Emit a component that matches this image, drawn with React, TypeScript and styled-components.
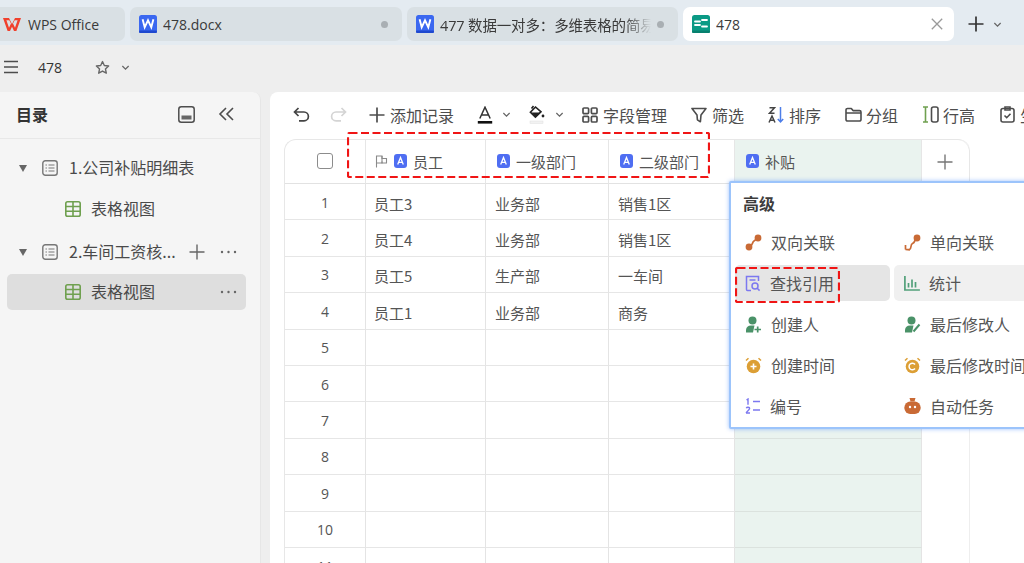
import React from "react";
import styled, { createGlobalStyle } from "styled-components";

const Global = createGlobalStyle`
  html, body { margin: 0; padding: 0; background: #eeeeee; }
  body { font-family: "Noto Sans CJK SC", "Noto Sans", sans-serif; }
  * { box-sizing: border-box; }
`;

const Page = styled.div`
  position: relative; width: 1024px; height: 563px; overflow: hidden;
  display: flex; flex-direction: column; background: #eeeeee; color: #444;
`;
const TabStrip = styled.div`
  height: 45px; flex: none; display: flex; align-items: flex-start; gap: 5px;
  padding-top: 7px; background: #e4ebf1; margin-left: -10px;
`;
const Tab = styled.div<{ $w: number; $active?: boolean }>`
  width: ${p => p.$w}px; height: 34px; flex: none; display: flex; align-items: center;
  border-radius: 7px; padding: 0 ${p => (p.$active ? 11 : 9)}px 0 9px; gap: 6px; font-size: 14px; color: #3a3a3a;
  background: ${p => (p.$active ? "#ffffff" : "#d9e0e4")}; white-space: nowrap; overflow: hidden;
`;
const FirstTab = styled(Tab)`
  padding-left: 13px; gap: 7px;
`;
const TabTitle = styled.span`
  flex: 1; overflow: hidden; white-space: nowrap; font-size: 14.5px; min-width: 0; letter-spacing: -.15px;
  font-family: "Open Sans", "Noto Sans CJK SC", sans-serif;
  -webkit-mask-image: linear-gradient(90deg, #000 calc(100% - 26px), transparent);
  mask-image: linear-gradient(90deg, #000 calc(100% - 26px), transparent);
`;
const PlainTitle = styled(TabTitle)`
  -webkit-mask-image: none; mask-image: none; font-size: 14px; letter-spacing: 0;
`;
const Dot = styled.span`
  width: 7px; height: 7px; border-radius: 50%; background: #a9afb3; flex: none; margin: 0 5px 0 0;
`;
const NewTab = styled.div`
  display: flex; align-items: center; gap: 9px; height: 34px; margin-left: 9px; color: #333;
`;
const TitleBar = styled.div`
  height: 47px; flex: none; display: flex; align-items: center; padding: 0 0 3px 3px; color: #444;
`;
const DocName = styled.span`
  font-family: "Open Sans", sans-serif; font-size: 14px; color: #333; margin: 0 32px 0 19px; width: 25px;
`;
const Body = styled.div`
  flex: 1; min-height: 0; display: flex; gap: 9px;
`;
const Sidebar = styled.aside`
  width: 261px; flex: none; background: #f5f5f5; border-radius: 0 8px 0 0; border-right: 1px solid #e6e6e6;
  display: flex; flex-direction: column;
`;
const SideHead = styled.div`
  height: 47px; flex: none; display: flex; align-items: center; padding: 0 25px 2px 16px; gap: 23px;
  border-bottom: 1px solid #e8e8e8;
`;
const SideTitle = styled.div`
  flex: 1; font-size: 16px; font-weight: 700; color: #333;
`;
const Tree = styled.div`
  padding: 11px 14px 0 7px; display: flex; flex-direction: column;
`;
const TreeRow = styled.div<{ $selected?: boolean; $top?: number }>`
  height: 36px; display: flex; align-items: center; border-radius: 5px; margin-top: ${p => p.$top ?? 0}px;
  background: ${p => (p.$selected ? "#dedede" : "transparent")}; font-size: 16px; color: #4a4a4a; position: relative;
`;
const Caret = styled.span`
  width: 0; height: 0; border-left: 4.5px solid transparent; border-right: 4.5px solid transparent;
  border-top: 7px solid #666; margin: 0 15px 0 12px; flex: none;
`;
const TreeLabel = styled.span`
  margin-left: 11px; flex: 1; white-space: nowrap; position: relative; top: -1px;
`;
const ViewLabel = styled(TreeLabel)`
  margin-left: 10px;
`;
const ViewIndent = styled.span`
  width: 58px; flex: none;
`;
const TreeActions = styled.span`
  display: flex; align-items: center; gap: 15px; margin-right: 9px; color: #666;
`;
const Main = styled.main`
  flex: 1; min-width: 0; background: #fff; border-radius: 8px 0 0 0; overflow: hidden;
  display: flex; flex-direction: column; padding-left: 14px;
`;
const Toolbar = styled.div`
  height: 47px; flex: none; display: flex; align-items: center; padding: 0 0 2px 9px; white-space: nowrap;
`;
const ToolBtn = styled.div<{ $left?: number; $gap?: number }>`
  display: flex; align-items: center; gap: ${p => p.$gap ?? 5}px; margin-left: ${p => p.$left ?? 0}px;
  font-size: 16px; color: #4d4d4d; flex: none;
`;
const Grid = styled.div`
  width: 686px; display: grid; grid-template-columns: 81px 120px 123px 126px 187px 48px;
  grid-template-rows: 44px; grid-auto-rows: 36.4px; border: 1px solid #e7e7e7; border-bottom: 0; border-right: 0;
  border-top-left-radius: 12px; border-top-right-radius: 12px;
`;
const Head = styled.div<{ $tint?: boolean; $pad?: number }>`
  display: flex; align-items: center; gap: 6px; padding-left: ${p => p.$pad ?? 11}px; padding-bottom: 1px;
  border-right: 1px solid #e6e6e6; border-bottom: 1px solid #e2e2e2; font-size: 15px; color: #555;
  background: ${p => (p.$tint ? "#eaf3ef" : "transparent")};
`;
const CheckHead = styled(Head)`
  justify-content: center; padding: 0 1px 1px 0; border-top-left-radius: 12px;
`;
const AddHead = styled.div`
  display: flex; align-items: center; justify-content: center; color: #777; padding-right: 2px;
  border-top-right-radius: 12px; border-right: 1px solid #e7e7e7; border-bottom: 1px solid #e2e2e2;
`;
const Check = styled.span`
  width: 16px; height: 16px; border: 1.5px solid #8c8c8c; border-radius: 3px; display: block;
`;
const Cell = styled.div<{ $tint?: boolean; $index?: boolean; $pad?: number }>`
  border-right: 1px solid #e4e4e4; border-bottom: 1px solid ${p => (p.$tint ? "#dbe2de" : "#e6e6e6")}; display: flex; align-items: center;
  justify-content: ${p => (p.$index ? "center" : "flex-start")}; padding-left: ${p => (p.$index ? 0 : p.$pad ?? 8)}px;
  padding-top: ${p => (p.$index ? 1 : 3)}px;
  font-size: ${p => (p.$index ? 14 : 15)}px; color: #555;
  background: ${p => (p.$tint ? "#eaf3ef" : "transparent")};
  font-family: ${p => (p.$index ? '"Open Sans", sans-serif' : '"Noto Sans CJK SC", sans-serif')};
`;
const Blank = styled.div`
  border-right: 1px solid #eeeeee;
`;
const Popover = styled.div`
  position: absolute; left: 729px; top: 181px; width: 320px; height: 248px; background: #fff;
  border: 2px solid #9cc4fb; box-shadow: 0 0 4px rgba(90, 150, 250, .6); border-radius: 2px;
  padding: 7px 0 0 4px;
`;
const PopTitle = styled.div`
  font-size: 16px; font-weight: 700; color: #3d3d3d; padding-left: 8px; height: 26px; line-height: 26px;
  margin-bottom: 8px;
`;
const PopGrid = styled.div`
  display: grid; grid-template-columns: 155px 155px; column-gap: 4px; row-gap: 5px; grid-auto-rows: 36px;
`;
const PopItem = styled.div<{ $bg?: string }>`
  display: flex; align-items: center; gap: 9px; padding-left: 10px; border-radius: 5px; font-size: 16px;
  color: #555; white-space: nowrap; background: ${p => p.$bg ?? "transparent"};
`;
const RedBox = styled.svg<{ $x: number; $y: number }>`
  position: absolute; left: ${p => p.$x}px; top: ${p => p.$y}px; pointer-events: none;
`;

type SP = { s?: number; c?: string; w?: number };
const Plus = ({ s = 16, c = "currentColor", w = 1.6 }: SP) => (
  <svg width={s} height={s} viewBox="0 0 16 16" fill="none" stroke={c} strokeWidth={w}><path d="M8 .5v15M.5 8h15" /></svg>
);
const Chev = ({ s = 9, c = "#666" }: SP) => (
  <svg width={s} height={s} viewBox="0 0 10 10" fill="none" stroke={c} strokeWidth="1.4"><path d="M1.5 3.3 5 6.8l3.5-3.5" /></svg>
);
const More = () => (
  <svg width="17" height="4" viewBox="0 0 17 4" fill="#666"><circle cx="2" cy="2" r="1.2" /><circle cx="8.5" cy="2" r="1.2" /><circle cx="15" cy="2" r="1.2" /></svg>
);
const WpsLogo = () => (
  <svg width="18" height="13" viewBox="0 0 18 13"><path d="M0 0h6l3 6 3-6h6l-4.600 13H11L9 8.700 7 13H4.600z M3.400 2.300 6 9.800l2-4.300-1.700-3.200z M14.600 2.300h-2.900L10 5.500l2 4.300z" fill="#f0402c" fillRule="evenodd" /></svg>
);
const WordIcon = () => (
  <svg width="18" height="18" viewBox="0 0 18 18"><rect width="18" height="18" rx="2.5" fill="#3b68f0" /><rect y="15.500" width="18" height="2.500" rx="1" fill="#1f49cf" /><path d="M3.600 4.200 5.700 12.300 9 5.300l3.300 7 2.100-8.100" fill="none" stroke="#fff" strokeWidth="1.900" /></svg>
);
const SheetLogo = () => (
  <svg width="18" height="18" viewBox="0 0 18 18"><rect width="18" height="18" rx="2.500" fill="#0b9a85" /><rect y="15.500" width="18" height="2.500" rx="1" fill="#07806e" /><path d="M3 6.500h5M10 5h5M3 10h5M10 11.500h5" stroke="#fff" strokeWidth="1.800" strokeLinecap="round" /></svg>
);
const CloseX = () => (
  <svg width="12" height="12" viewBox="0 0 12 12" stroke="#9a9a9a" strokeWidth="1.3"><path d="M.8.8l10.400 10.400M11.200.8.8 11.200" /></svg>
);
const Menu = () => (
  <svg width="16" height="14" viewBox="0 0 16 14" stroke="#4d4d4d" strokeWidth="1.600"><path d="M1 1.500h14M1 7h14M1 12.500h14" /></svg>
);
const Star = () => (
  <svg width="15" height="15" viewBox="0 0 24 24" fill="none" stroke="#666" strokeWidth="2.200" strokeLinejoin="round"><path d="m12 2.500 2.900 6.300 6.900.8-5.100 4.700 1.400 6.800-6.100-3.400-6.100 3.400 1.400-6.800L2.200 9.600l6.900-.8z" /></svg>
);
const Panel = () => (
  <svg width="17" height="17" viewBox="0 0 17 17"><rect x=".8" y=".8" width="15.400" height="15.400" rx="2.500" fill="none" stroke="#4d4d4d" strokeWidth="1.500" /><rect x="3.500" y="9.500" width="10" height="4" fill="#666" /></svg>
);
const DoubleLeft = () => (
  <svg width="17" height="14" viewBox="0 0 17 14" fill="none" stroke="#4d4d4d" strokeWidth="1.600"><path d="M8 1 2 7l6 6M15 1 9 7l6 6" /></svg>
);
const Doc = () => (
  <svg width="16" height="16" viewBox="0 0 16 16" fill="none" stroke="#777"><rect x=".8" y=".8" width="14.400" height="14.400" rx="2.500" strokeWidth="1.400" /><path d="M3.500 5h1.400M6.500 5h6M3.500 8h1.400M6.500 8h6M3.500 11h1.400M6.500 11h6" strokeWidth="1.200" /></svg>
);
const GreenTable = () => (
  <svg width="16" height="16" viewBox="0 0 16 16" fill="none" stroke="#6fa04f" strokeWidth="1.600"><rect x=".8" y=".8" width="14.400" height="14.400" rx="1.800" /><path d="M.8 5.500h14.400M.8 10.300h14.400M8 .8v14.400" /></svg>
);
const Undo = ({ c = "#444" }: { c?: string }) => (
  <svg width="17" height="16" viewBox="0 0 17 16" fill="none" stroke={c} strokeWidth="1.700"><path d="M5.500 1 1.500 5l4 4M1.500 5h9.500a4.400 4.400 0 0 1 0 8.800H6" /></svg>
);
const RedoWrap = styled.span`
  display: inline-flex; transform: scaleX(-1);
`;
const Redo = () => (
  <RedoWrap><Undo c="#d4d4d4" /></RedoWrap>
);
const TextColor = () => (
  <svg width="16" height="18" viewBox="0 0 16 18"><path d="M2.800 12.500 8 1.200l5.200 11.300M4.600 9h6.800" fill="none" stroke="#333" strokeWidth="1.500" /><rect x=".8" y="15" width="14.400" height="2.600" fill="#111" /></svg>
);
const Bucket = () => (
  <svg width="16" height="19" viewBox="0 0 16 19"><path d="M4.500 1 2.500 3.500M6.500 2 1.400 7.200l5 5 5.600-5.400z" fill="none" stroke="#222" strokeWidth="1.600" /><path d="M2 7.500h9.500l-5 4.800z" fill="#222" /><circle cx="14" cy="11" r="1.400" fill="#222" /><rect x="1" y="16" width="13" height="2.400" fill="#f2f2f2" stroke="#ddd" strokeWidth=".5" /></svg>
);
const Fields = () => (
  <svg width="16" height="16" viewBox="0 0 16 16" fill="none" stroke="#4d4d4d" strokeWidth="1.700"><rect x="1" y="1" width="5.600" height="5.600" rx="1" /><rect x="9.400" y="1" width="5.600" height="5.600" rx="1" /><rect x="1" y="9.400" width="5.600" height="5.600" rx="1" /><rect x="9.400" y="9.400" width="5.600" height="5.600" rx="1" /></svg>
);
const Funnel = () => (
  <svg width="16" height="16" viewBox="0 0 16 16" fill="none" stroke="#4d4d4d" strokeWidth="1.600" strokeLinejoin="round"><path d="M1 1.500h14L10 8l-.6 6.800-3-2L6 8z" /></svg>
);
const Sort = () => (
  <svg width="16" height="18" viewBox="0 0 16 18" fill="none"><path d="M1.500 1.800h5L1.500 7.200h5" stroke="#444" strokeWidth="1.500" /><path d="M1 16.500 4 10l3 6.500M2 14.300h4" stroke="#444" strokeWidth="1.500" /><path d="M12.500 1v15M9.800 13l2.700 3 2.700-3" stroke="#4d7ee8" strokeWidth="1.500" /></svg>
);
const Folder = () => (
  <svg width="17" height="15" viewBox="0 0 17 15" fill="none" stroke="#4d4d4d" strokeWidth="1.600" strokeLinejoin="round"><path d="M1 3a1.500 1.500 0 0 1 1.500-1.500h3.800L8 3.600h6.500A1.500 1.500 0 0 1 16 5.100v7.400a1.500 1.500 0 0 1-1.500 1.500h-12A1.500 1.500 0 0 1 1 12.500zM1 6h15" /></svg>
);
const RowHeight = () => (
  <svg width="17" height="17" viewBox="0 0 17 17" fill="none"><path d="M1 1h5M1 16h5M3.500 1v15" stroke="#6fa04f" strokeWidth="1.600" /><rect x="9.500" y="1" width="6.500" height="15" rx="2" stroke="#4d4d4d" strokeWidth="1.600" /></svg>
);
const Clip = () => (
  <svg width="15" height="17" viewBox="0 0 15 17" fill="none" stroke="#4d4d4d" strokeWidth="1.600"><rect x="1" y="2.500" width="13" height="13.500" rx="2" /><path d="M5 1h5v3H5zM4.500 9.500l2.200 2.200 3.800-4" /></svg>
);
const Flag = () => (
  <svg width="13" height="13" viewBox="0 0 13 13" fill="none" stroke="#8a8a8a" strokeWidth="1.100"><path d="M1.500 12.500V1h5.500v2.500h4.500v4.500H7V6.500" /><path d="M1.500 8H7V1" /></svg>
);
const TypeA = () => (
  <svg width="13" height="14" viewBox="0 0 13 14"><rect width="13" height="14" rx="3" fill="#4f6ef2" /><path d="M3.700 10.500 6.500 3.600l2.800 6.900M4.700 8.300h3.600" fill="none" stroke="#fff" strokeWidth="1.300" /></svg>
);

const Link2 = ({ arrow }: { arrow?: boolean }) => (
  <svg width="17" height="17" viewBox="0 0 17 17" fill="none">
    <circle cx="13" cy="4" r="3.400" fill="#c96a35" />
    {arrow ? <path d="M1.500 15.500 6 16M1.500 15.500 1.500 11M1.500 15.500h4c2.500-1 .5-5 3-6s2-3 3-4" stroke="#c96a35" strokeWidth="1.700" /> : <><circle cx="4" cy="13" r="3.400" fill="#c96a35" /><path d="M5 12c3-.5 2-4 4-5s2-2 3-3" stroke="#c96a35" strokeWidth="1.800" /></>}
  </svg>
);
const Lookup = () => (
  <svg width="16" height="17" viewBox="0 0 16 17" fill="none" stroke="#7c78f0" strokeWidth="1.500"><path d="M6 15.500H2.500a1 1 0 0 1-1-1V1.500h12V6" /><path d="M4.500 5h6" /><circle cx="10" cy="11" r="3" /><path d="m12.200 13.200 2.400 2.400" /></svg>
);
const Bars = () => (
  <svg width="16" height="16" viewBox="0 0 16 16" fill="none" stroke="#52a07a" strokeWidth="1.700"><path d="M.9 1v14h15M4.500 8v4.500M8 4.500v8M11.500 7v5.500" /></svg>
);
const Person = ({ pen }: { pen?: boolean }) => (
  <svg width="17" height="17" viewBox="0 0 17 17"><circle cx="7.500" cy="4.500" r="4" fill="#4a9268" /><path d="M1 16.500V14a5 5 0 0 1 5-4.500h3.500L8 16.500z" fill="#4a9268" />{pen ? <path d="M9.500 15.500 15.500 8.500" stroke="#4a9268" strokeWidth="2" /> : <path d="M9.500 13.500h6.500M12.700 10.500v6" stroke="#4a9268" strokeWidth="1.700" />}</svg>
);
const Clock = ({ refresh }: { refresh?: boolean }) => (
  <svg width="17" height="17" viewBox="0 0 17 17" fill="none"><circle cx="8.500" cy="9.500" r="6.800" fill="#dc9f35" /><path d="M1 3.500 3.500 1.200M16 3.500l-2.500-2.300" stroke="#dc9f35" strokeWidth="1.500" />{refresh ? <path d="M11 7.500a3.300 3.300 0 1 0 0 4" stroke="#fff" strokeWidth="1.500" /> : <path d="M5.500 9.500h6M8.500 6.500v6" stroke="#fff" strokeWidth="1.600" />}</svg>
);
const Numbered = () => (
  <svg width="16" height="16" viewBox="0 0 16 16" fill="none" stroke="#7c78f0" strokeWidth="1.400"><path d="M1.500 2 3 1v5.800M1 15h4M1.300 10.200c.6-1.400 3.400-1.200 3.300.3 0 1.200-2.500 2.400-3.500 4.500M8 3.500h7M8 12h7" /></svg>
);
const Robot = () => (
  <svg width="17" height="16" viewBox="0 0 17 16"><path d="M5.500 0h6l-1 3.500h-4z" fill="#c96a35" /><rect x=".4" y="3.500" width="16.200" height="12.500" rx="5.800" fill="#c96a35" /><circle cx="6" cy="9" r="1.200" fill="#fff" /><circle cx="11" cy="9" r="1.200" fill="#fff" /></svg>
);

const rows: [string, string, string][] = [
  ["员工3", "业务部", "销售1区"],
  ["员工4", "业务部", "销售1区"],
  ["员工5", "生产部", "一车间"],
  ["员工1", "业务部", "商务"],
  ["", "", ""], ["", "", ""], ["", "", ""], ["", "", ""], ["", "", ""], ["", "", ""], ["", "", ""],
];

const menu: [React.ReactNode, string, string?][] = [
  [<Link2 />, "双向关联"],
  [<Link2 arrow />, "单向关联"],
  [<Lookup />, "查找引用", "#e5e5e5"],
  [<Bars />, "统计", "#f0f0f0"],
  [<Person />, "创建人"],
  [<Person pen />, "最后修改人"],
  [<Clock />, "创建时间"],
  [<Clock refresh />, "最后修改时间"],
  [<Numbered />, "编号"],
  [<Robot />, "自动任务"],
];

const StarChev = styled.span`
  margin-left: 11px; display: inline-flex;
`;

const Dashed = ({ x, y, w, h }: { x: number; y: number; w: number; h: number }) => (
  <RedBox $x={x} $y={y} width={w} height={h}>
    <rect x="1" y="1" width={w - 2} height={h - 2} rx="1.500" fill="none" stroke="#f01515" strokeWidth="2.200" strokeDasharray="8 3.500" />
  </RedBox>
);

export default function App() {
  return (
    <Page>
      <Global />
      <TabStrip>
        <FirstTab $w={135}><WpsLogo /><PlainTitle>WPS Office</PlainTitle></FirstTab>
        <Tab $w={272}><WordIcon /><PlainTitle>478.docx</PlainTitle><Dot /></Tab>
        <Tab $w={271}><WordIcon /><TabTitle>477 数据一对多：多维表格的简易能力</TabTitle><Dot /></Tab>
        <Tab $w={271} $active><SheetLogo /><PlainTitle>478</PlainTitle><CloseX /></Tab>
        <NewTab><Plus s={16} c="#333" w={1.7} /><Chev /></NewTab>
      </TabStrip>
      <TitleBar>
        <Menu />
        <DocName>478</DocName>
        <Star />
        <StarChev><Chev /></StarChev>
      </TitleBar>
      <Body>
        <Sidebar>
          <SideHead>
            <SideTitle>目录</SideTitle>
            <Panel />
            <DoubleLeft />
          </SideHead>
          <Tree>
            <TreeRow><Caret /><Doc /><TreeLabel>1.公司补贴明细表</TreeLabel></TreeRow>
            <TreeRow $top={5}><ViewIndent /><GreenTable /><ViewLabel>表格视图</ViewLabel></TreeRow>
            <TreeRow $top={7}><Caret /><Doc /><TreeLabel>2.车间工资核...</TreeLabel><TreeActions><Plus s={16} c="#666" w={1.4} /><More /></TreeActions></TreeRow>
            <TreeRow $selected $top={4}><ViewIndent /><GreenTable /><ViewLabel>表格视图</ViewLabel><TreeActions><More /></TreeActions></TreeRow>
          </Tree>
        </Sidebar>
        <Main>
          <Toolbar>
            <ToolBtn><Undo /></ToolBtn>
            <ToolBtn $left={20}><Redo /></ToolBtn>
            <ToolBtn $left={22}><Plus s={16} c="#4d4d4d" w={1.7} />添加记录</ToolBtn>
            <ToolBtn $left={23} $gap={9}><TextColor /><Chev /></ToolBtn>
            <ToolBtn $left={18} $gap={10}><Bucket /><Chev /></ToolBtn>
            <ToolBtn $left={18}><Fields />字段管理</ToolBtn>
            <ToolBtn $left={24}><Funnel />筛选</ToolBtn>
            <ToolBtn $left={24}><Sort />排序</ToolBtn>
            <ToolBtn $left={24} $gap={4}><Folder />分组</ToolBtn>
            <ToolBtn $left={24} $gap={4}><RowHeight />行高</ToolBtn>
            <ToolBtn $left={25}><Clip />生成</ToolBtn>
          </Toolbar>
          <Grid>
            <CheckHead><Check /></CheckHead>
            <Head $pad={9}><Flag /><TypeA />员工</Head>
            <Head><TypeA />一级部门</Head>
            <Head><TypeA />二级部门</Head>
            <Head $tint><TypeA />补贴</Head>
            <AddHead><Plus s={16} c="#777" w={1.4} /></AddHead>
            {rows.map((r, i) => (
              <React.Fragment key={i}>
                <Cell $index>{i + 1}</Cell>
                <Cell>{r[0]}</Cell>
                <Cell $pad={9}>{r[1]}</Cell>
                <Cell $pad={9}>{r[2]}</Cell>
                <Cell $tint />
                <Blank />
              </React.Fragment>
            ))}
          </Grid>
        </Main>
      </Body>
      <Popover>
        <PopTitle>高级</PopTitle>
        <PopGrid>
          {menu.map(([icon, label, bg]) => (
            <PopItem key={label} $bg={bg}>{icon}<span>{label}</span></PopItem>
          ))}
        </PopGrid>
      </Popover>
      <Dashed x={347} y={132} w={363} h={46} />
      <Dashed x={735} y={267} w={105} h={36} />
    </Page>
  );
}
